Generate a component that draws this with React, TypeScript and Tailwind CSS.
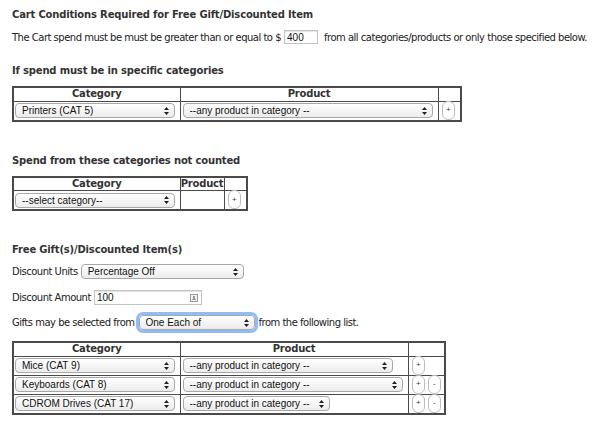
import React from "react";

const body = { fontFamily: '"DejaVu Sans", Verdana, sans-serif' };
const ctl = { fontFamily: '"Liberation Sans", Arial, sans-serif' };

function Arrows() {
  return (
    <svg width="5" height="8" viewBox="0 0 5 8" className="absolute right-[6px] top-1/2 -translate-y-1/2 pointer-events-none">
      <path d="M2.5 0 L5 3 L0 3 Z M0 5 L5 5 L2.5 8 Z" fill="#222" />
    </svg>
  );
}

function Select({ value, w, focus }: { value: string; w: string; focus?: boolean }) {
  return (
    <span
      className={`relative block rounded-[4px] ${focus ? "shadow-[0_0_0_3px_rgba(110,165,245,0.75)]" : ""} ${w}`}
    >
      <select
        defaultValue={value}
        style={ctl}
        className="block w-full h-[15px] appearance-none rounded-[4px] border border-[#a8a8a8] bg-gradient-to-b from-white to-[#ececec] pl-[6px] pr-[14px] text-[10px] leading-[13px] tracking-normal text-[#111] outline-none"
      >
        <option>{value}</option>
      </select>
      <Arrows />
    </span>
  );
}

function PlusMinus({ label }: { label: string }) {
  return (
    <button
      style={ctl}
      className="shrink-0 flex items-center justify-center w-[13px] h-[19px] -mt-[1px] rounded-[6px] border border-[#bdbdbd] bg-white text-[8px] leading-none text-[#333]"
    >
      {label}
    </button>
  );
}

function Th({ children, w }: { children?: React.ReactNode; w: string }) {
  return (
    <th className={`border border-[#4a4a4a] text-[10px] font-bold tracking-[-0.2px] text-[#333] h-[14px] leading-[12px] p-0 text-center ${w}`}>
      {children}
    </th>
  );
}

function Td({ children, className = "" }: { children?: React.ReactNode; className?: string }) {
  return (
    <td className={`border border-[#4a4a4a] h-[19px] py-0 align-middle ${className}`}>
      <div className="flex items-center h-[18px] gap-[3px]">{children}</div>
    </td>
  );
}

function Table({ children, w }: { children: React.ReactNode; w: string }) {
  return (
    <table className={`border-collapse border-2 border-[#4a4a4a] table-fixed ${w}`}>
      <tbody>{children}</tbody>
    </table>
  );
}

function Heading({ children, className = "" }: { children: React.ReactNode; className?: string }) {
  return (
    <h2 className={`text-[10px] font-bold leading-[13px] tracking-[-0.17px] text-[#333] ${className}`}>{children}</h2>
  );
}

export default function App() {
  return (
    <div
      style={body}
      className="bg-white w-[601px] h-[430px] px-[12px] pt-[8px] text-[#222] tracking-[-0.5px] flex flex-col items-start"
    >
      <Heading>Cart Conditions Required for Free Gift/Discounted Item</Heading>

      <div className="mt-[9px] flex items-center text-[10px] leading-[13px] whitespace-nowrap">
        <span>The Cart spend must be must be greater than or equal to $</span>
        <input
          defaultValue="400"
          style={ctl}
          className="ml-[3px] w-[34px] h-[14px] border border-[#c3c3c3] shadow-[inset_0_1px_1px_rgba(0,0,0,0.12)] px-[2px] text-[10px] tracking-normal text-[#111] outline-none"
        />
        <span className="ml-[6px]">from all categories/products or only those specified below.</span>
      </div>

      <Heading className="mt-[20px]">If spend must be in specific categories</Heading>

      <div className="mt-[9px]">
        <Table w="w-[448px]">
          <tr>
            <Th w="w-[167px]">Category</Th>
            <Th w="w-[258px]">Product</Th>
            <Th w="w-[23px]" />
          </tr>
          <tr>
            <Td className="pl-[1px] pr-0"><Select value="Printers (CAT 5)" w="w-[160px]" /></Td>
            <Td className="px-[2px]"><Select value="--any product in category --" w="w-[250px]" /></Td>
            <Td className="pl-[3px]"><PlusMinus label="+" /></Td>
          </tr>
        </Table>
      </div>

      <Heading className="mt-[32px]">Spend from these categories not counted</Heading>

      <div className="mt-[9px]">
        <Table w="w-[234px]">
          <tr>
            <Th w="w-[167px]">Category</Th>
            <Th w="w-[44px]">Product</Th>
            <Th w="w-[23px]" />
          </tr>
          <tr>
            <Td className="pl-[1px] pr-0"><Select value="--select category--" w="w-[160px]" /></Td>
            <Td />
            <Td className="pl-[3px]"><PlusMinus label="+" /></Td>
          </tr>
        </Table>
      </div>

      <Heading className="mt-[32px]">Free Gift(s)/Discounted Item(s)</Heading>

      <div className="mt-[8px] flex items-center text-[10px] leading-[15px] whitespace-nowrap">
        <span className="mr-[3px]">Discount Units</span>
        <Select value="Percentage Off" w="w-[163px]" />
      </div>

      <div className="mt-[11px] flex items-center text-[10px] leading-[15px] whitespace-nowrap">
        <span className="mr-[3px]">Discount Amount</span>
        <span className="relative inline-block">
          <input
            defaultValue="100"
            style={ctl}
            className="block w-[108px] h-[15px] border border-[#c3c3c3] shadow-[inset_0_1px_1px_rgba(0,0,0,0.12)] px-[2px] text-[10px] tracking-normal text-[#111] outline-none"
          />
          <svg width="8" height="8" viewBox="0 0 8 8" className="absolute right-[4px] top-1/2 -translate-y-1/2">
            <rect x="0.5" y="0.5" width="7" height="7" fill="#f2f2f2" stroke="#9a9a9a" />
            <rect x="3" y="2" width="2" height="3" fill="#9a9a9a" />
            <rect x="2" y="5" width="4" height="1" fill="#9a9a9a" />
          </svg>
        </span>
      </div>

      <div className="mt-[10px] flex items-center text-[10px] leading-[15px] whitespace-nowrap">
        <span className="mr-[4px]">Gifts may be selected from</span>
        <Select value="One Each of" w="w-[116px]" focus />
        <span className="ml-[4px]">from the following list.</span>
      </div>

      <div className="mt-[11px]">
        <Table w="w-[432px]">
          <tr>
            <Th w="w-[167px]">Category</Th>
            <Th w="w-[228px]">Product</Th>
            <Th w="w-[37px]" />
          </tr>
          <tr>
            <Td className="pl-[1px] pr-0"><Select value="Mice (CAT 9)" w="w-[160px]" /></Td>
            <Td className="px-[2px]"><Select value="--any product in category --" w="w-[210px]" /></Td>
            <Td className="pl-[3px]"><PlusMinus label="+" /></Td>
          </tr>
          <tr>
            <Td className="pl-[1px] pr-0"><Select value="Keyboards (CAT 8)" w="w-[160px]" /></Td>
            <Td className="px-[2px]"><Select value="--any product in category --" w="w-[220px]" /></Td>
            <Td className="pl-[3px]"><PlusMinus label="+" /><PlusMinus label="-" /></Td>
          </tr>
          <tr>
            <Td className="pl-[1px] pr-0"><Select value="CDROM Drives (CAT 17)" w="w-[160px]" /></Td>
            <Td className="px-[2px]"><Select value="--any product in category --" w="w-[147px]" /></Td>
            <Td className="pl-[3px]"><PlusMinus label="+" /><PlusMinus label="-" /></Td>
          </tr>
        </Table>
      </div>
    </div>
  );
}
